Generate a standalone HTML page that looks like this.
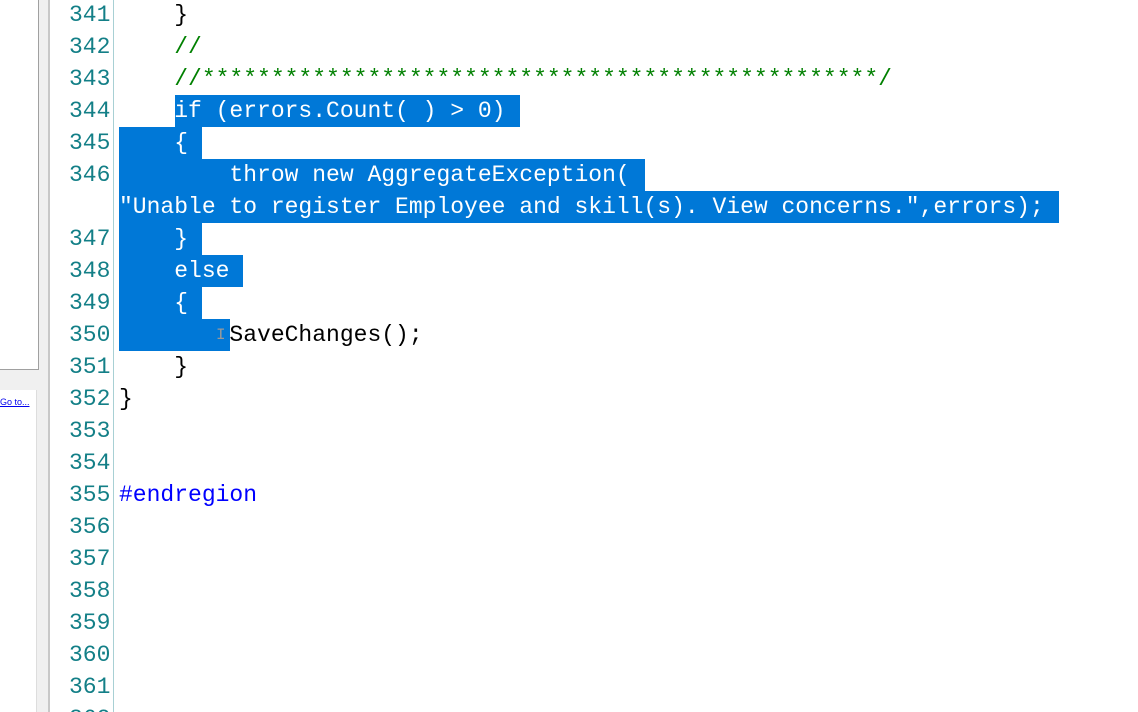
<!DOCTYPE html>
<html><head><meta charset="utf-8"><style>
html,body{margin:0;padding:0;width:1138px;height:712px;overflow:hidden;background:#fff;position:relative;font-family:"Liberation Mono",monospace;}
.r{position:absolute;left:0;height:32px;line-height:32px;font-size:23px;white-space:pre;}
.n{position:absolute;left:69px;width:44px;text-align:left;color:#137f87;}
.c{position:absolute;left:119px;color:#000;}
.sel{position:absolute;background:#0078d7;height:32px;}
.w{color:#fff;}
.g{color:#008000;}
.b{color:#0000ff;}
</style></head><body>
<div style="position:absolute;left:0;top:0;width:38px;height:369px;background:#fff;border-right:1px solid #a0a0a0;border-bottom:1px solid #a0a0a0"></div>
<div style="position:absolute;left:0;top:370px;width:39px;height:342px;background:#f0f0f0"></div>
<div style="position:absolute;left:0;top:390px;width:36px;height:322px;background:#fff;border-right:1px solid #ddd"></div>
<div style="position:absolute;left:0;top:397px;font-family:'Liberation Sans',sans-serif;font-size:9px;color:#0000ee;text-decoration:underline">Go to...</div>
<div style="position:absolute;left:39px;top:0;width:10px;height:712px;background:#f0f0f0"></div>
<div style="position:absolute;left:48px;top:0;width:2px;height:712px;background:#c8c8c8"></div>
<div style="position:absolute;left:113px;top:0;width:1px;height:712px;background:#a8d0d4"></div>

<div class="sel" style="left:175px;top:95px;width:345px"></div>
<div class="sel" style="left:119px;top:127px;width:83px"></div>
<div class="sel" style="left:119px;top:159px;width:526px"></div>
<div class="sel" style="left:119px;top:191px;width:940px"></div>
<div class="sel" style="left:119px;top:223px;width:83px"></div>
<div class="sel" style="left:119px;top:255px;width:124px"></div>
<div class="sel" style="left:119px;top:287px;width:83px"></div>
<div class="sel" style="left:119px;top:319px;width:111px"></div>

<div class="r" style="top:-1px"><span class="n">341</span><span class="c">    }</span></div>
<div class="r" style="top:31px"><span class="n">342</span><span class="c g">    //</span></div>
<div class="r" style="top:63px"><span class="n">343</span><span class="c g">    //*************************************************/</span></div>
<div class="r" style="top:95px"><span class="n">344</span><span class="c w">    if (errors.Count( ) &gt; 0)</span></div>
<div class="r" style="top:127px"><span class="n">345</span><span class="c w">    {</span></div>
<div class="r" style="top:159px"><span class="n">346</span><span class="c w">        throw new AggregateException(</span></div>
<div class="r" style="top:191px"><span class="c w">"Unable to register Employee and skill(s). View concerns.",errors);</span></div>
<div class="r" style="top:223px"><span class="n">347</span><span class="c w">    }</span></div>
<div class="r" style="top:255px"><span class="n">348</span><span class="c w">    else</span></div>
<div class="r" style="top:287px"><span class="n">349</span><span class="c w">    {</span></div>
<div class="r" style="top:319px"><span class="n">350</span><span class="c">        SaveChanges();</span></div>
<div style="position:absolute;left:216px;top:326px;font-size:16px;color:#999;font-family:'Liberation Mono',monospace">I</div>
<div class="r" style="top:351px"><span class="n">351</span><span class="c">    }</span></div>
<div class="r" style="top:383px"><span class="n">352</span><span class="c">}</span></div>
<div class="r" style="top:415px"><span class="n">353</span></div>
<div class="r" style="top:447px"><span class="n">354</span></div>
<div class="r" style="top:479px"><span class="n">355</span><span class="c b">#endregion</span></div>
<div class="r" style="top:511px"><span class="n">356</span></div>
<div class="r" style="top:543px"><span class="n">357</span></div>
<div class="r" style="top:575px"><span class="n">358</span></div>
<div class="r" style="top:607px"><span class="n">359</span></div>
<div class="r" style="top:639px"><span class="n">360</span></div>
<div class="r" style="top:671px"><span class="n">361</span></div>
<div class="r" style="top:703px"><span class="n">362</span></div>
</body></html>
